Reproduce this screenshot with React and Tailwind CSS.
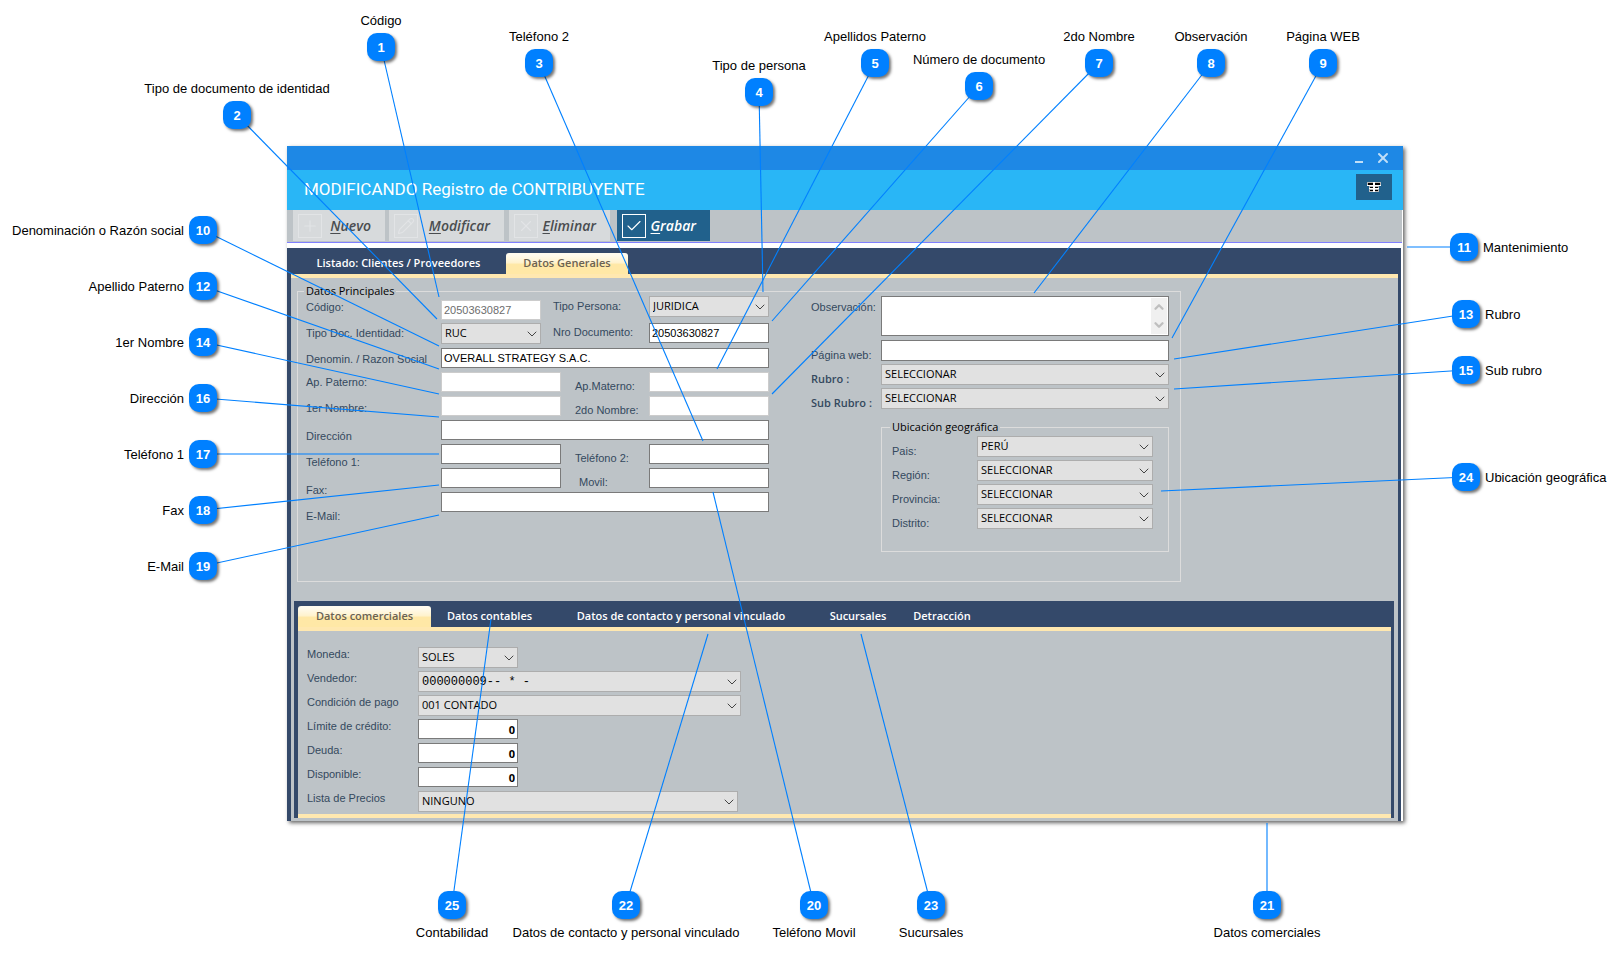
import { Check, ChevronDown, ChevronUp, Pencil, Plus, X } from "lucide-react"

const CALLOUTS = [
    { n: 1, text: "Código", x: 381, y: 47, to: [439, 297], side: "top" },
    { n: 2, text: "Tipo de documento de identidad", x: 237, y: 115, to: [437, 319], side: "top" },
    { n: 3, text: "Teléfono 2", x: 539, y: 63, to: [703, 441], side: "top" },
    { n: 4, text: "Tipo de persona", x: 759, y: 92, to: [763, 292], side: "top" },
    { n: 5, text: "Apellidos Paterno", x: 875, y: 63, to: [717, 369], side: "top" },
    { n: 6, text: "Número de documento", x: 979, y: 86, to: [772, 321], side: "top" },
    { n: 7, text: "2do Nombre", x: 1099, y: 63, to: [772, 394], side: "top" },
    { n: 8, text: "Observación", x: 1211, y: 63, to: [1034, 293], side: "top" },
    { n: 9, text: "Página WEB", x: 1323, y: 63, to: [1172, 338], side: "top" },
    { n: 10, text: "Denominación o Razón social", x: 203, y: 230, to: [439, 346], side: "left" },
    { n: 12, text: "Apellido Paterno", x: 203, y: 286, to: [439, 369], side: "left" },
    { n: 14, text: "1er Nombre", x: 203, y: 342, to: [439, 394], side: "left" },
    { n: 16, text: "Dirección", x: 203, y: 398, to: [439, 417], side: "left" },
    { n: 17, text: "Teléfono 1", x: 203, y: 454, to: [439, 454], side: "left" },
    { n: 18, text: "Fax", x: 203, y: 510, to: [439, 485], side: "left" },
    { n: 19, text: "E-Mail", x: 203, y: 566, to: [439, 515], side: "left" },
    { n: 11, text: "Mantenimiento", x: 1464, y: 247, to: [1407, 247], side: "right" },
    { n: 13, text: "Rubro", x: 1466, y: 314, to: [1174, 359], side: "right" },
    { n: 15, text: "Sub rubro", x: 1466, y: 370, to: [1174, 389], side: "right" },
    { n: 24, text: "Ubicación geográfica", x: 1466, y: 477, to: [1161, 491], side: "right" },
    { n: 25, text: "Contabilidad", x: 452, y: 905, to: [491, 619], side: "bottom" },
    { n: 22, text: "Datos de contacto y personal vinculado", x: 626, y: 905, to: [708, 634], side: "bottom" },
    { n: 20, text: "Teléfono Movil", x: 814, y: 905, to: [713, 492], side: "bottom" },
    { n: 23, text: "Sucursales", x: 931, y: 905, to: [861, 634], side: "bottom" },
    { n: 21, text: "Datos comerciales", x: 1267, y: 905, to: [1267, 823], side: "bottom" },
]

const CALLOUT_TEXT = {
    top: "bottom-full left-1/2 -translate-x-1/2 mb-[3px]",
    bottom: "top-full left-1/2 -translate-x-1/2 mt-[5px]",
    left: "right-full top-1.5 mr-[5px]",
    right: "left-full top-1.5 ml-[5px]",
}

function Callouts() {
    return (
        <div className="absolute inset-0 pointer-events-none">
            <svg className="absolute inset-0 w-full h-full" aria-hidden="true">
                {CALLOUTS.map((c) => (
                    <line key={c.n} x1={c.x} y1={c.y} x2={c.to[0]} y2={c.to[1]} stroke="#0080ff" strokeWidth="1.1" />
                ))}
            </svg>
            {CALLOUTS.map((c) => (
                <div
                    key={c.n}
                    className="absolute size-7 -translate-x-1/2 -translate-y-1/2"
                    style={{ left: c.x, top: c.y }}
                >
                    <span className="flex size-7 items-center justify-center rounded-[10px] bg-[#0080ff] pt-px text-[13px] font-bold text-white shadow-[2px_2px_3px_rgba(0,0,0,0.55)]">
                        {c.n}
                    </span>
                    <span className={`absolute whitespace-nowrap text-[13px] leading-[18px] text-black ${CALLOUT_TEXT[c.side]}`}>
                        {c.text}
                    </span>
                </div>
            ))}
        </div>
    )
}

function ToolButton({ icon: Icon, label, className, active }) {
    return (
        <button
            type="button"
            className={`flex h-[31px] items-center justify-between pl-[5px] pr-3.5 font-['Open_Sans',sans-serif] text-sm font-semibold italic ${active ? "bg-[#21618c] text-white" : "bg-[#d7dadc] text-[#4a4d50]"} ${className}`}
        >
            <span className={`flex size-6 items-center justify-center border ${active ? "border-white" : "border-[#e2e4e6] text-[#e2e4e6]"}`}>
                <Icon size={18} strokeWidth={1.5} />
            </span>
            <span>
                <span className="underline underline-offset-2">{label[0]}</span>
                {label.slice(1)}
            </span>
        </button>
    )
}

function Tab({ children, className, active }) {
    return (
        <button
            type="button"
            role="tab"
            aria-selected={!!active}
            className={`h-[21px] whitespace-nowrap text-center font-['Open_Sans',sans-serif] text-[11px] font-semibold ${active ? "rounded-t-[3px] bg-linear-to-b from-[#fffbee] from-10% via-[#fff3cf] via-45% to-[#ffe8a6] to-55% text-[#6b6252]" : "text-white"} ${className}`}
        >
            {children}
        </button>
    )
}

function Label({ id, children, className = "" }) {
    return (
        <label htmlFor={id} className={`block whitespace-nowrap text-[11px] text-[#34495e] ${className}`}>
            {children}
        </label>
    )
}

function TextInput({ className = "w-[120px]", ...props }) {
    return (
        <input
            type="text"
            className={`block h-5 border border-[#7a7a7a] bg-white px-0.5 text-[11px] text-black disabled:border-[#cccccc] disabled:text-[#6d6d6d] ${className}`}
            {...props}
        />
    )
}

function Select({ id, value, className = "w-full", font = "font-['Open_Sans',sans-serif] text-[11px] font-medium" }) {
    return (
        <div className={`relative h-[21px] ${className}`}>
            <select
                id={id}
                defaultValue={value}
                className={`block h-full w-full appearance-none border border-[#adadad] bg-[#e1e1e1] px-[3px] text-black ${font}`}
            >
                <option>{value}</option>
            </select>
            <ChevronDown size={16} strokeWidth={1.5} className="pointer-events-none absolute right-px top-[3px] text-[#444444]" />
        </div>
    )
}

function Legend({ children }) {
    return (
        <legend className="-ml-0.5 px-0.5 font-['Open_Sans',sans-serif] text-[11px] font-medium leading-[10px] text-black">
            {children}
        </legend>
    )
}

function MainData() {
    return (
        <fieldset className="mx-1.5 mt-[7px] flex h-[296px] w-[884px] border border-[#dcdcdc] pl-2">
            <Legend>Datos Principales</Legend>

            <div className="w-[135px] pt-px leading-5">
                <div className="flex flex-col gap-1.5">
                    <Label id="codigo">Código:</Label>
                    <Label id="tipoDoc">Tipo Doc. Identidad:</Label>
                    <Label id="razon">Denomin. / Razon Social</Label>
                </div>
                <div className="mt-[3px] flex flex-col gap-1.5">
                    <Label id="apPaterno">Ap. Paterno:</Label>
                    <Label id="nombre1">1er Nombre:</Label>
                </div>
                <div className="mt-2 flex flex-col gap-1.5">
                    <Label id="direccion">Dirección</Label>
                    <Label id="telefono1">Teléfono 1:</Label>
                </div>
                <div className="mt-2 flex flex-col gap-1.5">
                    <Label id="fax">Fax:</Label>
                    <Label id="email">E-Mail:</Label>
                </div>
            </div>

            <div className="w-[328px]">
                <div className="flex justify-between">
                    <div className="flex flex-col gap-[3px] pt-1">
                        <TextInput id="codigo" defaultValue="20503630827" disabled className="w-[100px]" />
                        <Select id="tipoDoc" value="RUC" className="w-[100px]" />
                    </div>
                    <div className="w-[84px] leading-5">
                        <Label id="tipoPersona">Tipo Persona:</Label>
                        <Label id="nroDoc" className="mt-1.5">Nro Documento:</Label>
                    </div>
                    <div className="flex w-[120px] flex-col gap-1.5">
                        <Select id="tipoPersona" value="JURIDICA" />
                        <TextInput id="nroDoc" defaultValue="20503630827" />
                    </div>
                </div>
                <div className="mt-1 flex flex-col gap-1">
                    <TextInput id="razon" defaultValue="OVERALL STRATEGY S.A.C." className="w-full" />
                    <div className="flex">
                        <div className="flex flex-col gap-1">
                            <TextInput id="apPaterno" disabled />
                            <TextInput id="nombre1" disabled />
                        </div>
                        <div className="flex w-[88px] flex-col gap-3 pl-3.5 pt-2 leading-3">
                            <Label id="apMaterno">Ap.Materno:</Label>
                            <Label id="nombre2">2do Nombre:</Label>
                        </div>
                        <div className="flex flex-col gap-1">
                            <TextInput id="apMaterno" disabled />
                            <TextInput id="nombre2" disabled />
                        </div>
                    </div>
                    <TextInput id="direccion" className="w-full" />
                    <div className="flex">
                        <div className="flex flex-col gap-1">
                            <TextInput id="telefono1" />
                            <TextInput id="fax" />
                        </div>
                        <div className="flex w-[88px] flex-col gap-3 pl-3.5 pt-2 leading-3">
                            <Label id="telefono2">Teléfono 2:</Label>
                            <Label id="movil" className="pl-1">Movil:</Label>
                        </div>
                        <div className="flex flex-col gap-1">
                            <TextInput id="telefono2" />
                            <TextInput id="movil" />
                        </div>
                    </div>
                    <TextInput id="email" className="w-full" />
                </div>
            </div>

            <div className="ml-[42px] w-[70px] pt-px leading-5">
                <Label id="observacion">Observación:</Label>
                <div className="mt-7 flex flex-col gap-1">
                    <Label id="web">Página web:</Label>
                    <Label id="rubro" className="font-['Open_Sans',sans-serif] font-semibold">Rubro :</Label>
                    <Label id="subRubro" className="font-['Open_Sans',sans-serif] font-semibold">Sub Rubro :</Label>
                </div>
            </div>

            <div className="w-72">
                <div className="relative">
                    <textarea id="observacion" className="block h-10 w-full resize-none border border-[#7a7a7a] bg-white text-[11px]" />
                    <div className="absolute inset-y-0.5 right-0.5 flex w-4 flex-col items-center justify-around bg-[#f0f0f0] text-[#bfbfbf]">
                        <ChevronUp size={14} strokeWidth={4} />
                        <ChevronDown size={14} strokeWidth={4} />
                    </div>
                </div>
                <div className="mt-1 flex flex-col gap-[3px]">
                    <TextInput id="web" className="min-h-[21px] w-full" />
                    <Select id="rubro" value="SELECCIONAR" />
                    <Select id="subRubro" value="SELECCIONAR" />
                </div>
                <fieldset className="mt-[13px] flex h-[130px] border border-[#dcdcdc] pl-2.5">
                    <Legend>Ubicación geográfica</Legend>
                    <div className="flex w-[85px] flex-col gap-1 pt-[9px] leading-5">
                        <Label id="pais">Pais:</Label>
                        <Label id="region">Región:</Label>
                        <Label id="provincia">Provincia:</Label>
                        <Label id="distrito">Distrito:</Label>
                    </div>
                    <div className="flex w-44 flex-col gap-[3px] pt-1">
                        <Select id="pais" value="PERÚ" />
                        <Select id="region" value="SELECCIONAR" />
                        <Select id="provincia" value="SELECCIONAR" />
                        <Select id="distrito" value="SELECCIONAR" />
                    </div>
                </fieldset>
            </div>
        </fieldset>
    )
}

function Row({ id, label, children }) {
    return (
        <div className="flex h-6 items-start last:h-[23px]">
            <Label id={id} className="w-[111px] leading-[14px]">{label}</Label>
            {children}
        </div>
    )
}

function CommercialData() {
    return (
        <div className="border-y-4 border-[#ffe8b0] bg-[#bdc3c7] pl-[9px] pt-4">
            <Row id="moneda" label="Moneda:">
                <Select id="moneda" value="SOLES" className="w-[100px]" />
            </Row>
            <Row id="vendedor" label="Vendedor:">
                <Select id="vendedor" value="000000009-- * -" className="w-[323px]" font="font-['Liberation_Mono',monospace] text-xs" />
            </Row>
            <Row id="condicion" label="Condición de pago">
                <Select id="condicion" value="001 CONTADO" className="w-[323px]" />
            </Row>
            <Row id="limite" label="Límite de crédito:">
                <TextInput id="limite" defaultValue="0" className="w-[100px] text-right font-['Open_Sans',sans-serif] font-bold" />
            </Row>
            <Row id="deuda" label="Deuda:">
                <TextInput id="deuda" defaultValue="0" className="w-[100px] text-right font-['Open_Sans',sans-serif] font-bold" />
            </Row>
            <Row id="disponible" label="Disponible:">
                <TextInput id="disponible" defaultValue="0" className="w-[100px] text-right font-['Open_Sans',sans-serif] font-bold" />
            </Row>
            <Row id="lista" label="Lista de Precios">
                <Select id="lista" value="NINGUNO" className="w-80" />
            </Row>
        </div>
    )
}

function FormWindow() {
    return (
        <div className="bg-white shadow-[2px_2px_4px_rgba(0,0,0,0.6)]">
            <div className="flex h-6 items-center justify-end gap-3 bg-[#1e88e5] pr-3 text-[#c0def7]">
                <button type="button" aria-label="Minimizar" className="flex h-2.5 w-2 items-end">
                    <span className="h-0.5 w-full bg-current" />
                </button>
                <button type="button" aria-label="Cerrar">
                    <X size={16} strokeWidth={3} />
                </button>
            </div>
            <div className="flex h-10 items-center justify-between bg-[#29b6f6] pl-[17px] pr-[11px]">
                <h1 className="font-[Roboto,sans-serif] text-[17px] font-normal text-white">MODIFICANDO Registro de CONTRIBUYENTE</h1>
                <button type="button" aria-label="Menú" className="mb-1.5 flex h-[26px] w-9 items-center justify-center bg-[#21618c]">
                    <svg width="14" height="10" viewBox="0 0 14 10">
                        <path d="M0 0h14v4h-2v6H2V4H0z" fill="#b8b8b8" />
                        <path d="M0 3h14v1H0zM6 0h2v10H6zM2 6h10v1H2z" fill="#ffffff" />
                        <path d="M1 1h5v2H1zM8 1h5v2H8zM3 5h3v1H3zM8 5h3v1H8zM3 8h3v1H3zM8 8h3v1H8z" fill="#000000" />
                    </svg>
                </button>
            </div>
            <div className="mr-px flex h-[33px] border-b border-[#8080ff] bg-[#bdc3c7] pl-1.5">
                <ToolButton icon={Plus} label="Nuevo" className="w-[92px]" />
                <ToolButton icon={Pencil} label="Modificar" className="ml-1 w-[115px]" />
                <ToolButton icon={X} label="Eliminar" className="ml-[5px] w-[101px]" />
                <ToolButton icon={Check} label="Grabar" className="ml-[7px] w-[93px]" active />
            </div>

            <div className="mr-0.5 mt-[5px] border-l-4 border-r-3 border-[#34496a] bg-[#bdc3c7]">
                <div role="tablist" className="flex h-[26px] items-end bg-[#34496a]">
                    <Tab className="w-[215px]">Listado: Clientes / Proveedores</Tab>
                    <Tab className="w-[122px]" active>Datos Generales</Tab>
                </div>
                <div className="border-t-4 border-[#ffe8b0] pt-px">
                    <MainData />
                    <div className="ml-[3px] mr-1 mt-[19px] pb-[3px]">
                        <div className="border-l-4 border-r-3 border-[#34496a]">
                            <div role="tablist" className="flex h-[26px] items-end bg-[#34496a]">
                                <Tab className="w-[133px]" active>Datos comerciales</Tab>
                                <Tab className="w-[117px]">Datos contables</Tab>
                                <Tab className="w-[266px]">Datos de contacto y personal vinculado</Tab>
                                <Tab className="w-[88px]">Sucursales</Tab>
                                <Tab className="w-20">Detracción</Tab>
                            </div>
                            <CommercialData />
                        </div>
                    </div>
                </div>
            </div>
        </div>
    )
}

function App() {
    return (
        <main className="relative min-h-screen bg-white pb-[135px] pl-[287px] pr-[218px] pt-[146px] font-['Liberation_Sans',Arial,sans-serif]">
            <FormWindow />
            <Callouts />
        </main>
    )
}

export default App
